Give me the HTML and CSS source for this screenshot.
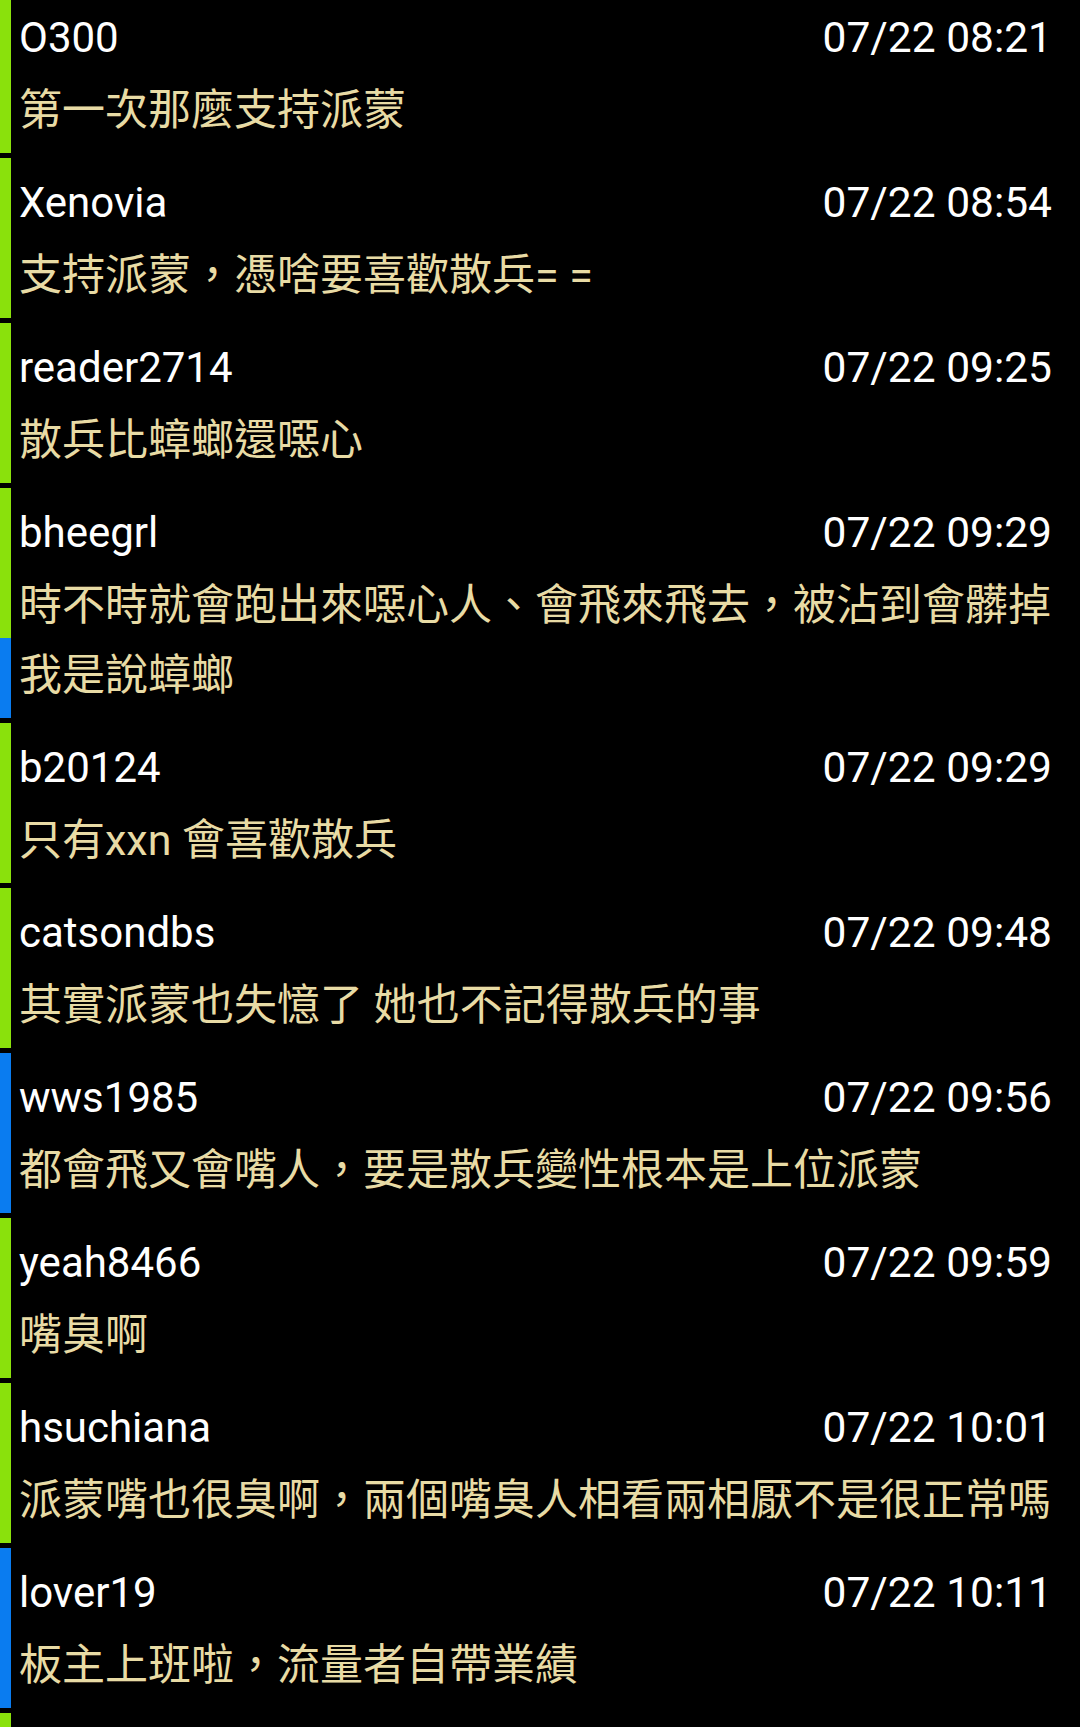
FILE: index.html
```html
<!DOCTYPE html>
<html lang="zh-Hant">
<head>
<meta charset="utf-8">
<title>推文</title>
<link rel="stylesheet" href="styles.css">
</head>
<body>
<ul class="thread">
  <li class="comment push">
    <div class="comment-head"><span class="author">O300</span><time class="time">07/22 08:21</time></div>
    <p class="comment-body">第一次那麼支持派蒙</p>
  </li>
  <li class="comment push">
    <div class="comment-head"><span class="author">Xenovia</span><time class="time">07/22 08:54</time></div>
    <p class="comment-body">支持派蒙，憑啥要喜歡散兵= =</p>
  </li>
  <li class="comment push">
    <div class="comment-head"><span class="author">reader2714</span><time class="time">07/22 09:25</time></div>
    <p class="comment-body">散兵比蟑螂還噁心</p>
  </li>
  <li class="comment push has-cont">
    <div class="comment-head"><span class="author">bheegrl</span><time class="time">07/22 09:29</time></div>
    <p class="comment-body">時不時就會跑出來噁心人、會飛來飛去，被沾到會髒掉</p>
  </li>
  <li class="comment arrow cont">
    <p class="comment-body">我是說蟑螂</p>
  </li>
  <li class="comment push">
    <div class="comment-head"><span class="author">b20124</span><time class="time">07/22 09:29</time></div>
    <p class="comment-body">只有xxn 會喜歡散兵</p>
  </li>
  <li class="comment push">
    <div class="comment-head"><span class="author">catsondbs</span><time class="time">07/22 09:48</time></div>
    <p class="comment-body">其實派蒙也失憶了 她也不記得散兵的事</p>
  </li>
  <li class="comment arrow">
    <div class="comment-head"><span class="author">wws1985</span><time class="time">07/22 09:56</time></div>
    <p class="comment-body">都會飛又會嘴人，要是散兵變性根本是上位派蒙</p>
  </li>
  <li class="comment push">
    <div class="comment-head"><span class="author">yeah8466</span><time class="time">07/22 09:59</time></div>
    <p class="comment-body">嘴臭啊</p>
  </li>
  <li class="comment push">
    <div class="comment-head"><span class="author">hsuchiana</span><time class="time">07/22 10:01</time></div>
    <p class="comment-body">派蒙嘴也很臭啊，兩個嘴臭人相看兩相厭不是很正常嗎</p>
  </li>
  <li class="comment arrow">
    <div class="comment-head"><span class="author">lover19</span><time class="time">07/22 10:11</time></div>
    <p class="comment-body">板主上班啦，流量者自帶業績</p>
  </li>
  <li class="comment push">
    <div class="comment-head"><span class="author">&nbsp;</span><time class="time">&nbsp;</time></div>
    <p class="comment-body">&nbsp;</p>
  </li>
</ul>
</body>
</html>
```
FILE: styles.css
```css
html, body {
  margin: 0;
  padding: 0;
  background: #000;
}

body {
  width: 1080px;
  height: 1727px;
  overflow: hidden;
  font-family: Roboto, "Noto Sans CJK TC", sans-serif;
}

.thread {
  list-style: none;
  margin: -7px 0 0 0;
  padding: 0;
  display: flex;
  flex-direction: column;
}

.comment {
  border-left: 11px solid #8ae10c;
  padding: 10px 28px 10px 8px;
  margin-bottom: 5px;
}

.comment.push { border-left-color: #8ae10c; }
.comment.arrow { border-left-color: #0a7cf0; }

.comment.has-cont {
  padding-bottom: 0;
  margin-bottom: 0;
}

.comment.cont {
  padding-top: 0;
}

.comment-head {
  display: flex;
  justify-content: space-between;
  align-items: baseline;
  height: 70px;
  line-height: 70px;
  color: #ffffff;
}

.author {
  font-size: 42px;
}

.time {
  font-size: 42.5px;
}

.comment-body {
  margin: 0;
  padding-top: 2px;
  height: 68px;
  line-height: 70px;
  font-size: 43px;
  color: #e8dba5;
  white-space: nowrap;
}
```
